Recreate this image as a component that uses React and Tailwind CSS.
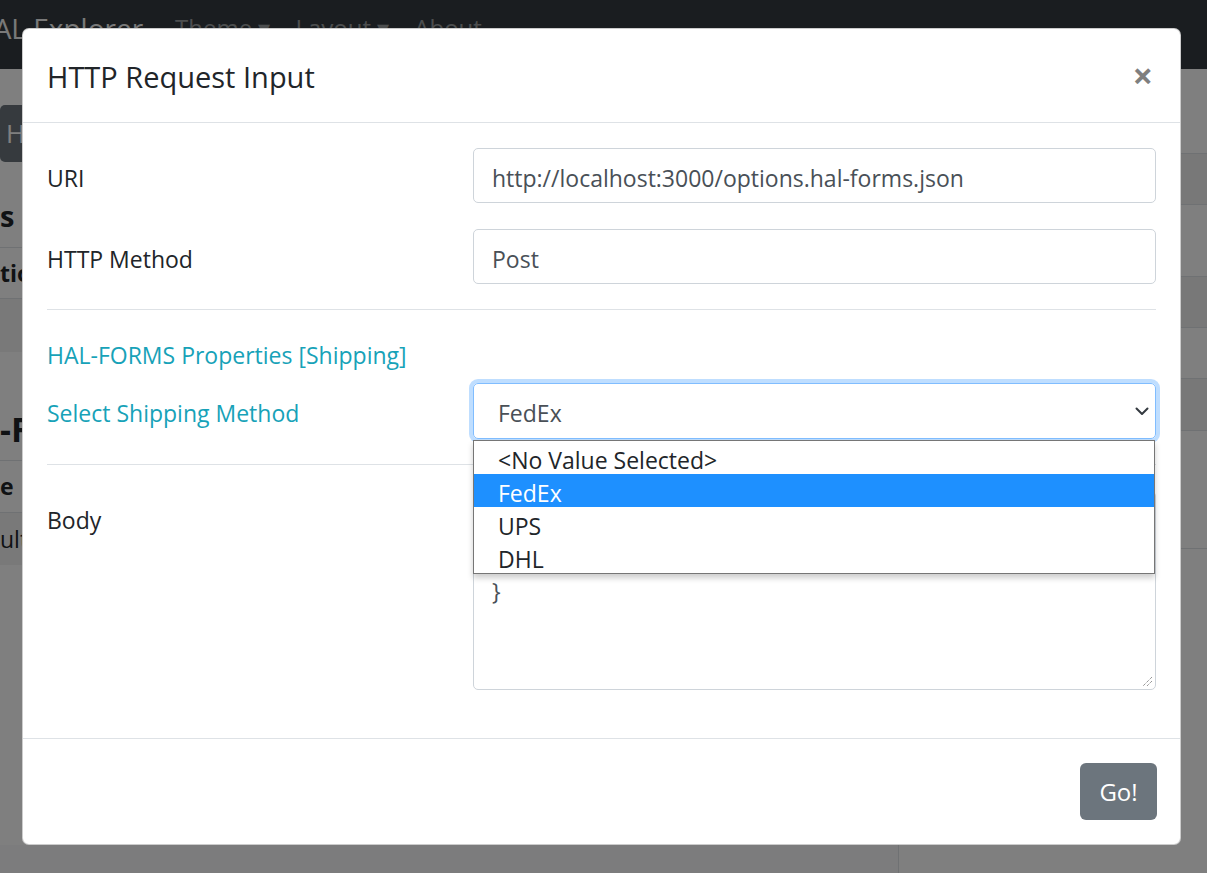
const shippingOptions = ["<No Value Selected>", "FedEx", "UPS", "DHL"];

function Background() {
  return (
    <div className="flex h-full flex-col">
      <nav className="flex h-[69px] shrink-0 items-start bg-[#343a40] leading-none">
        <span className="-ml-[27px] mt-[14px] whitespace-nowrap text-[28px] text-[#f2f2f2]">HAL Explorer</span>
        <div className="ml-[32px] mt-[16px] flex items-start gap-[25px] text-[24px] text-white/50">
          <span>Theme ▾</span>
          <span>Layout ▾</span>
          <span>About</span>
        </div>
      </nav>

      <div className="flex flex-1">
        {/* left column, only its edge shows beside the dialog */}
        <div className="flex w-[899px] flex-col border-r border-[#dee2e6] bg-[#f8f9fa]">
          <div className="bg-white pt-[36px]">
            <div className="flex h-[57px] w-[260px] items-center rounded-[5px] bg-[#6c757d] pl-[6px] text-[26px] text-white">
              HAL-FORMS
            </div>
            <div className="flex h-[85px] items-end pb-[10px] text-[29px] font-bold text-[#212529]">s</div>
            <div className="flex h-[51px] items-center border-t border-[#dee2e6] text-[23px] font-bold text-[#212529]">
              tion
            </div>
            <div className="h-[54px] border-t border-[#dee2e6] bg-[#f2f2f2]" />
            <div className="flex h-[108px] items-end pb-[5px] text-[34px] font-bold text-[#212529]">-F</div>
            <div className="flex h-[52px] items-center border-t border-[#dee2e6] text-[23px] font-bold text-[#212529]">
              e
            </div>
            <div className="flex h-[53px] items-center border-t border-[#dee2e6] bg-[#f2f2f2] text-[23px] text-[#212529]">
              ult
            </div>
            <div className="h-[280px] bg-white" />
          </div>
        </div>

        {/* right column */}
        <div className="flex flex-1 flex-col bg-white">
          <div className="h-[84px]" />
          <div className="h-[51px] border-t border-[#dee2e6] bg-[#f0f0f0]" />
          <div className="h-[72px] border-t border-[#dee2e6]" />
          <div className="h-[51px] border-t border-[#dee2e6] bg-[#f0f0f0]" />
          <div className="h-[51px] border-t border-[#dee2e6]" />
          <div className="h-[52px] border-t border-[#dee2e6] bg-[#f0f0f0]" />
          <div className="h-[118px] border-t border-[#dee2e6]" />
          <div className="flex-1 border-t border-[#dee2e6]" />
        </div>
      </div>
    </div>
  );
}

function ResizeGrip() {
  return (
    <svg width="12" height="12" viewBox="0 0 12 12" className="absolute bottom-[2px] right-[2px]">
      <path d="M11 2 L2 11 M11 6 L6 11" stroke="#6b6b6b" strokeWidth="1" strokeDasharray="1 1" />
    </svg>
  );
}

function Chevron() {
  return (
    <svg width="14" height="9" viewBox="0 0 14 9" fill="none">
      <path d="M1.5 1.5 L7 7 L12.5 1.5" stroke="#343a40" strokeWidth="2" strokeLinecap="round" strokeLinejoin="round" />
    </svg>
  );
}

function Modal() {
  return (
    <div className="absolute left-[22px] top-[28px] flex h-[817px] w-[1159px] flex-col rounded-[7px] border border-black/20 bg-white text-[23px] text-[#212529]">
      <div className="flex h-[94px] shrink-0 items-center justify-between border-b border-[#dee2e6] pl-[24px] pr-[27px]">
        <h5 className="pt-[2px] text-[29px] font-medium leading-none">HTTP Request Input</h5>
        <span className="text-[36px] font-bold leading-none text-black/50">×</span>
      </div>

      <div className="flex-1 px-[24px] pt-[25px]">
        <div className="grid grid-cols-[426px_1fr] items-center">
          <label className="pt-[6px]">URI</label>
          <div className="flex h-[55px] items-center rounded-[5px] border border-[#ced4da] pl-[18px] pt-[6px] text-[#495057]">
            http://localhost:3000/options.hal-forms.json
          </div>
        </div>
        <div className="mt-[26px] grid grid-cols-[426px_1fr] items-center">
          <label className="pt-[6px]">HTTP Method</label>
          <div className="flex h-[55px] items-center rounded-[5px] border border-[#ced4da] pl-[18px] pt-[6px] text-[#495057]">
            Post
          </div>
        </div>

        <hr className="mt-[25px] border-[#dee2e6]" />

        <div className="mt-[28px] flex h-[34px] items-center text-[#17a2b8]">HAL-FORMS Properties [Shipping]</div>

        <div className="mt-[11px] grid grid-cols-[426px_1fr] items-center">
          <label className="pt-[5px] text-[#17a2b8]">Select Shipping Method</label>
          <div className="relative">
            <div className="flex h-[56px] items-center justify-between rounded-[5px] border border-[#80bdff] pl-[24px] pr-[6px] text-[#495057] shadow-[0_0_0_4px_rgba(0,123,255,0.25)]">
              <span className="pt-[4px]">FedEx</span>
              <Chevron />
            </div>
            <ul className="absolute left-0 right-[1px] top-[57px] z-10 border border-[#767676] bg-white text-[#212529] shadow-[0_4px_6px_rgba(0,0,0,0.2)]">
              {shippingOptions.map((opt) => (
                <li
                  key={opt}
                  className={
                    opt === "FedEx"
                      ? "flex h-[33px] items-center bg-[#1e90ff] pl-[24px] pt-[5px] text-white"
                      : "flex h-[33px] items-center pl-[24px] pt-[5px]"
                  }
                >
                  {opt}
                </li>
              ))}
            </ul>
          </div>
        </div>

        <hr className="mt-[25px] border-[#dee2e6]" />

        <div className="mt-[26px] grid grid-cols-[426px_1fr] items-start">
          <label className="pt-[12px]">Body</label>
          <div className="relative h-[199px] rounded-[5px] border border-[#ced4da] pl-[18px] pt-[14px] leading-[34px] text-[#495057]">
            <div>{"{"}</div>
            <div>{'  "shippingMethod": "FedEx"'}</div>
            <div>{"}"}</div>
            <ResizeGrip />
          </div>
        </div>
      </div>

      <div className="flex h-[106px] shrink-0 items-center justify-end border-t border-[#dee2e6] pr-[23px]">
        <button className="h-[57px] w-[77px] rounded-[6px] bg-[#6c757d] text-[24px] text-white">Go!</button>
      </div>
    </div>
  );
}

export default function App() {
  return (
    <div className="relative h-[873px] w-[1207px] overflow-hidden bg-white font-['Open_Sans','Noto_Sans',sans-serif]">
      <Background />
      <div className="absolute inset-0 bg-black/50" />
      <Modal />
    </div>
  );
}
